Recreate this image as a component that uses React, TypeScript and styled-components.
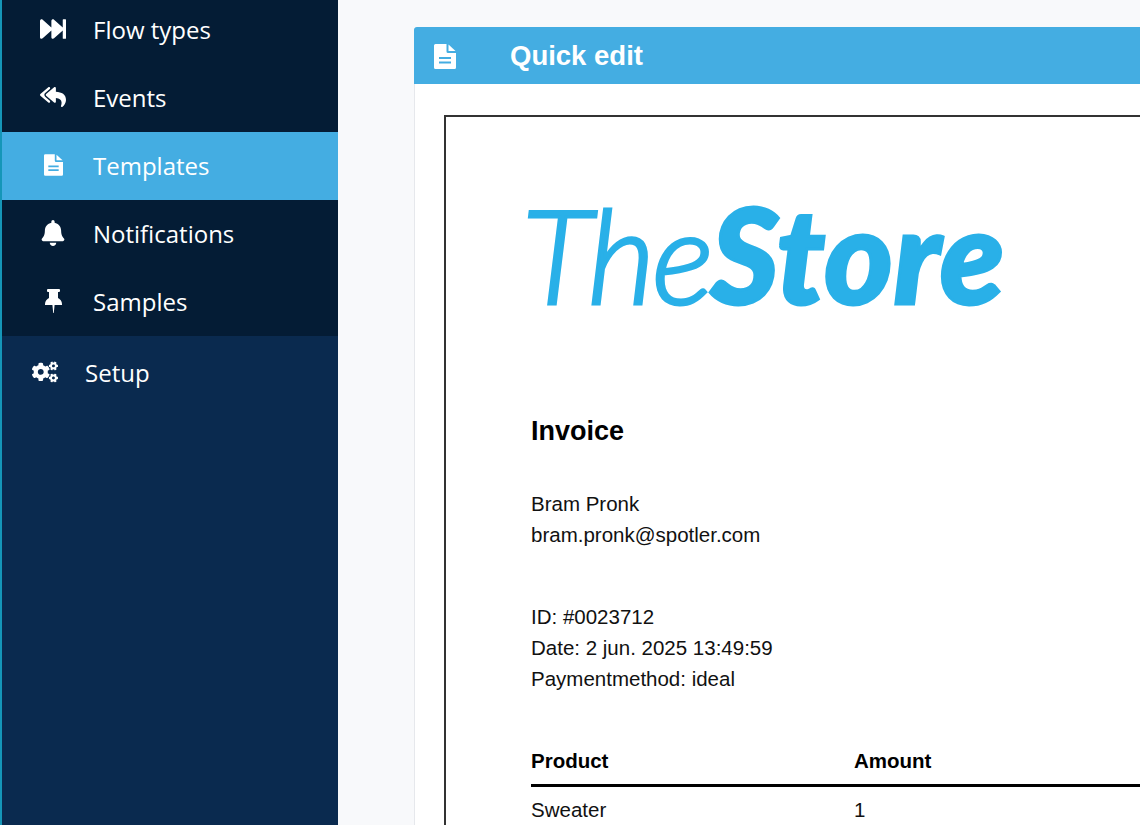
import styled, { createGlobalStyle } from "styled-components";
import { FaFastForward, FaReplyAll, FaBell, FaCogs } from "react-icons/fa";
import type { ReactNode } from "react";

const GlobalStyle = createGlobalStyle`
    html, body {
        margin: 0;
        padding: 0;
        height: 825px;
        overflow: hidden;
        background: #f8f9fb;
    }
`

const Page = styled.div`
    display: flex;
    width: 1140px;
    height: 825px;
    overflow: hidden;
`

const Sidebar = styled.nav`
    width: 336px;
    flex-shrink: 0;
    background: #0a2a4f;
    border-left: 2px solid #1596b8;
    font-family: "Open Sans", sans-serif;
    color: #fff;
`

const SubMenu = styled.div`
    background: #041c35;
    margin-top: -4px;
`

const MenuItem = styled.div<{ $active?: boolean }>`
    display: flex;
    align-items: center;
    box-sizing: border-box;
    height: 68px;
    padding: 0 0 2px 36px;
    font-size: 24px;
    background: ${(p) => (p.$active ? "#44ade2" : "transparent")};
`

const TopItem = styled(MenuItem)`
    height: 74px;
    padding-left: 28px;
`

const IconSlot = styled.span`
    display: flex;
    justify-content: center;
    width: 30px;
    margin-right: 25px;
    font-size: 26px;
`

const Main = styled.main`
    flex: 1;
    padding: 27px 0 0 76px;
    min-width: 0;
`

const Panel = styled.section`
    background: #fff;
    height: 800px;
`

const PanelHeader = styled.header`
    display: flex;
    align-items: center;
    height: 57px;
    box-sizing: border-box;
    padding: 1px 0 0 20px;
    background: #44ade2;
    color: #fff;
    border-radius: 3px 0 0 0;
    font: bold 27.5px "Liberation Sans", Arial, sans-serif;
`

const HeaderIcon = styled.span`
    display: flex;
    width: 76px;
`

const Body = styled.div`
    border-left: 1px solid #e6e8ec;
    padding: 31px 0 0 29px;
`

const Document = styled.article`
    border: solid #333;
    border-width: 2px 0 0 2px;
    height: 760px;
    padding: 78px 0 0 85px;
    font: 20.5px/30.7px "Liberation Sans", Arial, sans-serif;
    color: #111;
`

const Logo = styled.div`
    height: 118px;
    margin-left: -9px;
    font: italic 300 131px/118px "Lato", sans-serif;
    letter-spacing: -3px;
    color: #29b0e8;
    -webkit-text-stroke: 3px #29b0e8;
    white-space: nowrap;
`

const LogoStrong = styled.span`
    font-weight: 900;
    letter-spacing: 0.6px;
`

const Heading = styled.h1`
    margin: 101px 0 41px;
    font-size: 27px;
    line-height: 34px;
    font-weight: bold;
    color: #000;
`

const Block = styled.div`
    margin-bottom: 51.8px;
`

const TableHead = styled.div`
    display: grid;
    grid-template-columns: 323px 1fr;
    padding-bottom: 7px;
    border-bottom: 3px solid #000;
    font-weight: bold;
    color: #000;
`

const TableRow = styled.div`
    display: grid;
    grid-template-columns: 323px 1fr;
    padding-top: 8px;
`

const FileIcon = ({ width, height }: { width: number; height: number }) => (
    <svg width={width} height={height} viewBox="0 0 22 25" fill="currentColor">
        <path
            fillRule="evenodd"
            d="M1.5 0H12.5V7.5Q12.5 9 14 9H22V23.5Q22 25 20.5 25H1.5Q0 25 0 23.5V1.5Q0 0 1.5 0ZM5 13V15H17V13ZM5 17.5V19.5H17V17.5Z"
        />
        <path d="M14.5 0.5L21.5 7H14.5Z" />
    </svg>
);

const PinIcon = () => (
    <svg width="17" height="24" viewBox="0 0 17 24" fill="currentColor">
        <path d="M3 0H14Q15 0 15 1V2Q15 3 14 3H13V9C15 10 17 12 17 15V16H9.6L8.8 24H8.2L7.4 16H0V15C0 12 2 10 4 9V3H3Q2 3 2 2V1Q2 0 3 0Z" />
    </svg>
);

const navItems: { label: string; icon: ReactNode; active?: boolean }[] = [
    { label: "Flow types", icon: <FaFastForward /> },
    { label: "Events", icon: <FaReplyAll /> },
    { label: "Templates", icon: <FileIcon width={19} height={22} />, active: true },
    { label: "Notifications", icon: <FaBell /> },
    { label: "Samples", icon: <PinIcon /> },
];

const App = () => {
    return (
        <>
            <GlobalStyle />
            <Page>
                <Sidebar>
                    <SubMenu>
                        {navItems.map((item) => (
                            <MenuItem key={item.label} $active={item.active}>
                                <IconSlot>{item.icon}</IconSlot>
                                {item.label}
                            </MenuItem>
                        ))}
                    </SubMenu>
                    <TopItem>
                        <IconSlot><FaCogs /></IconSlot>
                        Setup
                    </TopItem>
                </Sidebar>
                <Main>
                    <Panel>
                        <PanelHeader>
                            <HeaderIcon><FileIcon width={22} height={25} /></HeaderIcon>
                            Quick edit
                        </PanelHeader>
                        <Body>
                            <Document>
                                <Logo>The<LogoStrong>Store</LogoStrong></Logo>
                                <Heading>Invoice</Heading>
                                <Block>
                                    <div>Bram Pronk</div>
                                    <div>bram.pronk@spotler.com</div>
                                </Block>
                                <Block>
                                    <div>ID: #0023712</div>
                                    <div>Date: 2 jun. 2025 13:49:59</div>
                                    <div>Paymentmethod: ideal</div>
                                </Block>
                                <TableHead>
                                    <span>Product</span>
                                    <span>Amount</span>
                                </TableHead>
                                <TableRow>
                                    <span>Sweater</span>
                                    <span>1</span>
                                </TableRow>
                            </Document>
                        </Body>
                    </Panel>
                </Main>
            </Page>
        </>
    );
};

export default App;
